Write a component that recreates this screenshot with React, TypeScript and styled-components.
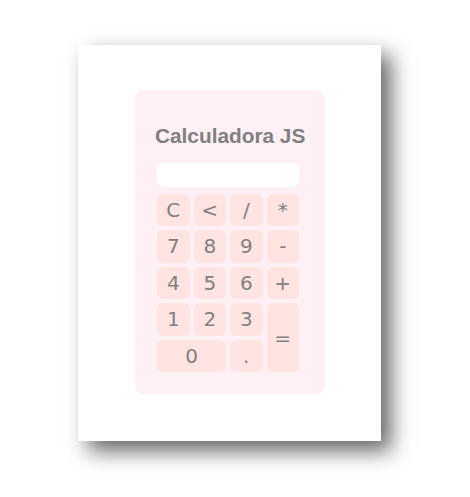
import React from "react";
import styled, { createGlobalStyle } from "styled-components";

const Global = createGlobalStyle`
  html, body { margin: 0; padding: 0; background: #ffffff; }
  body { width: 470px; height: 497px; overflow: hidden; }
`;

const Page = styled.div`
  padding: 45px 0 0 78px;
`;

const Sheet = styled.div`
  width: 303px;
  height: 396px;
  box-sizing: border-box;
  background: #ffffff;
  box-shadow: 10px 10px 20px rgba(0, 0, 0, 0.6);
  display: flex;
  justify-content: center;
  padding-top: 45px;
  padding-left: 1px;
`;

const Panel = styled.div`
  width: 190px;
  height: 304px;
  box-sizing: border-box;
  background: #fff0f5;
  border-radius: 9px;
  padding: 34px 24px 22px 22px;
  display: flex;
  flex-direction: column;
`;

const Title = styled.h2`
  margin: 0 0 14.5px 0;
  font-family: "Liberation Sans", Arial, sans-serif;
  font-weight: bold;
  font-size: 20.8px;
  line-height: 24px;
  color: #808080;
  text-align: center;
  white-space: nowrap;
  margin-left: -2px;
  margin-right: -2px;
`;

const Display = styled.input`
  width: 142px;
  height: 25.5px;
  box-sizing: border-box;
  border: none;
  outline: none;
  border-radius: 6px;
  background: #ffffff;
  margin: 0 0 6.3px 0;
  padding: 0 6px;
  font-family: "DejaVu Sans", Verdana, sans-serif;
  color: #808080;
`;

const Keys = styled.div`
  display: grid;
  grid-template-columns: repeat(4, 32.5px);
  grid-auto-rows: 32.5px;
  gap: 4px;
`;

const Key = styled.button<{ $wide?: boolean; $tall?: boolean }>`
  border: none;
  border-radius: 6px;
  background: #ffe4e1;
  color: #808080;
  font-family: "DejaVu Sans", Verdana, sans-serif;
  font-size: 20px;
  padding: 0;
  display: flex;
  align-items: center;
  justify-content: center;
  cursor: pointer;
  grid-column: ${(p) => (p.$wide ? "span 2" : "auto")};
  grid-row: ${(p) => (p.$tall ? "span 2" : "auto")};
`;

const keys: { label: string; wide?: boolean; tall?: boolean }[] = [
  { label: "C" }, { label: "<" }, { label: "/" }, { label: "*" },
  { label: "7" }, { label: "8" }, { label: "9" }, { label: "-" },
  { label: "4" }, { label: "5" }, { label: "6" }, { label: "+" },
  { label: "1" }, { label: "2" }, { label: "3" }, { label: "=", tall: true },
  { label: "0", wide: true }, { label: "." },
];

export default function App() {
  return (
    <>
      <Global />
      <Page>
        <Sheet>
          <Panel>
            <Title>Calculadora JS</Title>
            <Display type="text" readOnly />
            <Keys>
              {keys.map((k) => (
                <Key key={k.label} $wide={k.wide} $tall={k.tall}>
                  {k.label}
                </Key>
              ))}
            </Keys>
          </Panel>
        </Sheet>
      </Page>
    </>
  );
}
